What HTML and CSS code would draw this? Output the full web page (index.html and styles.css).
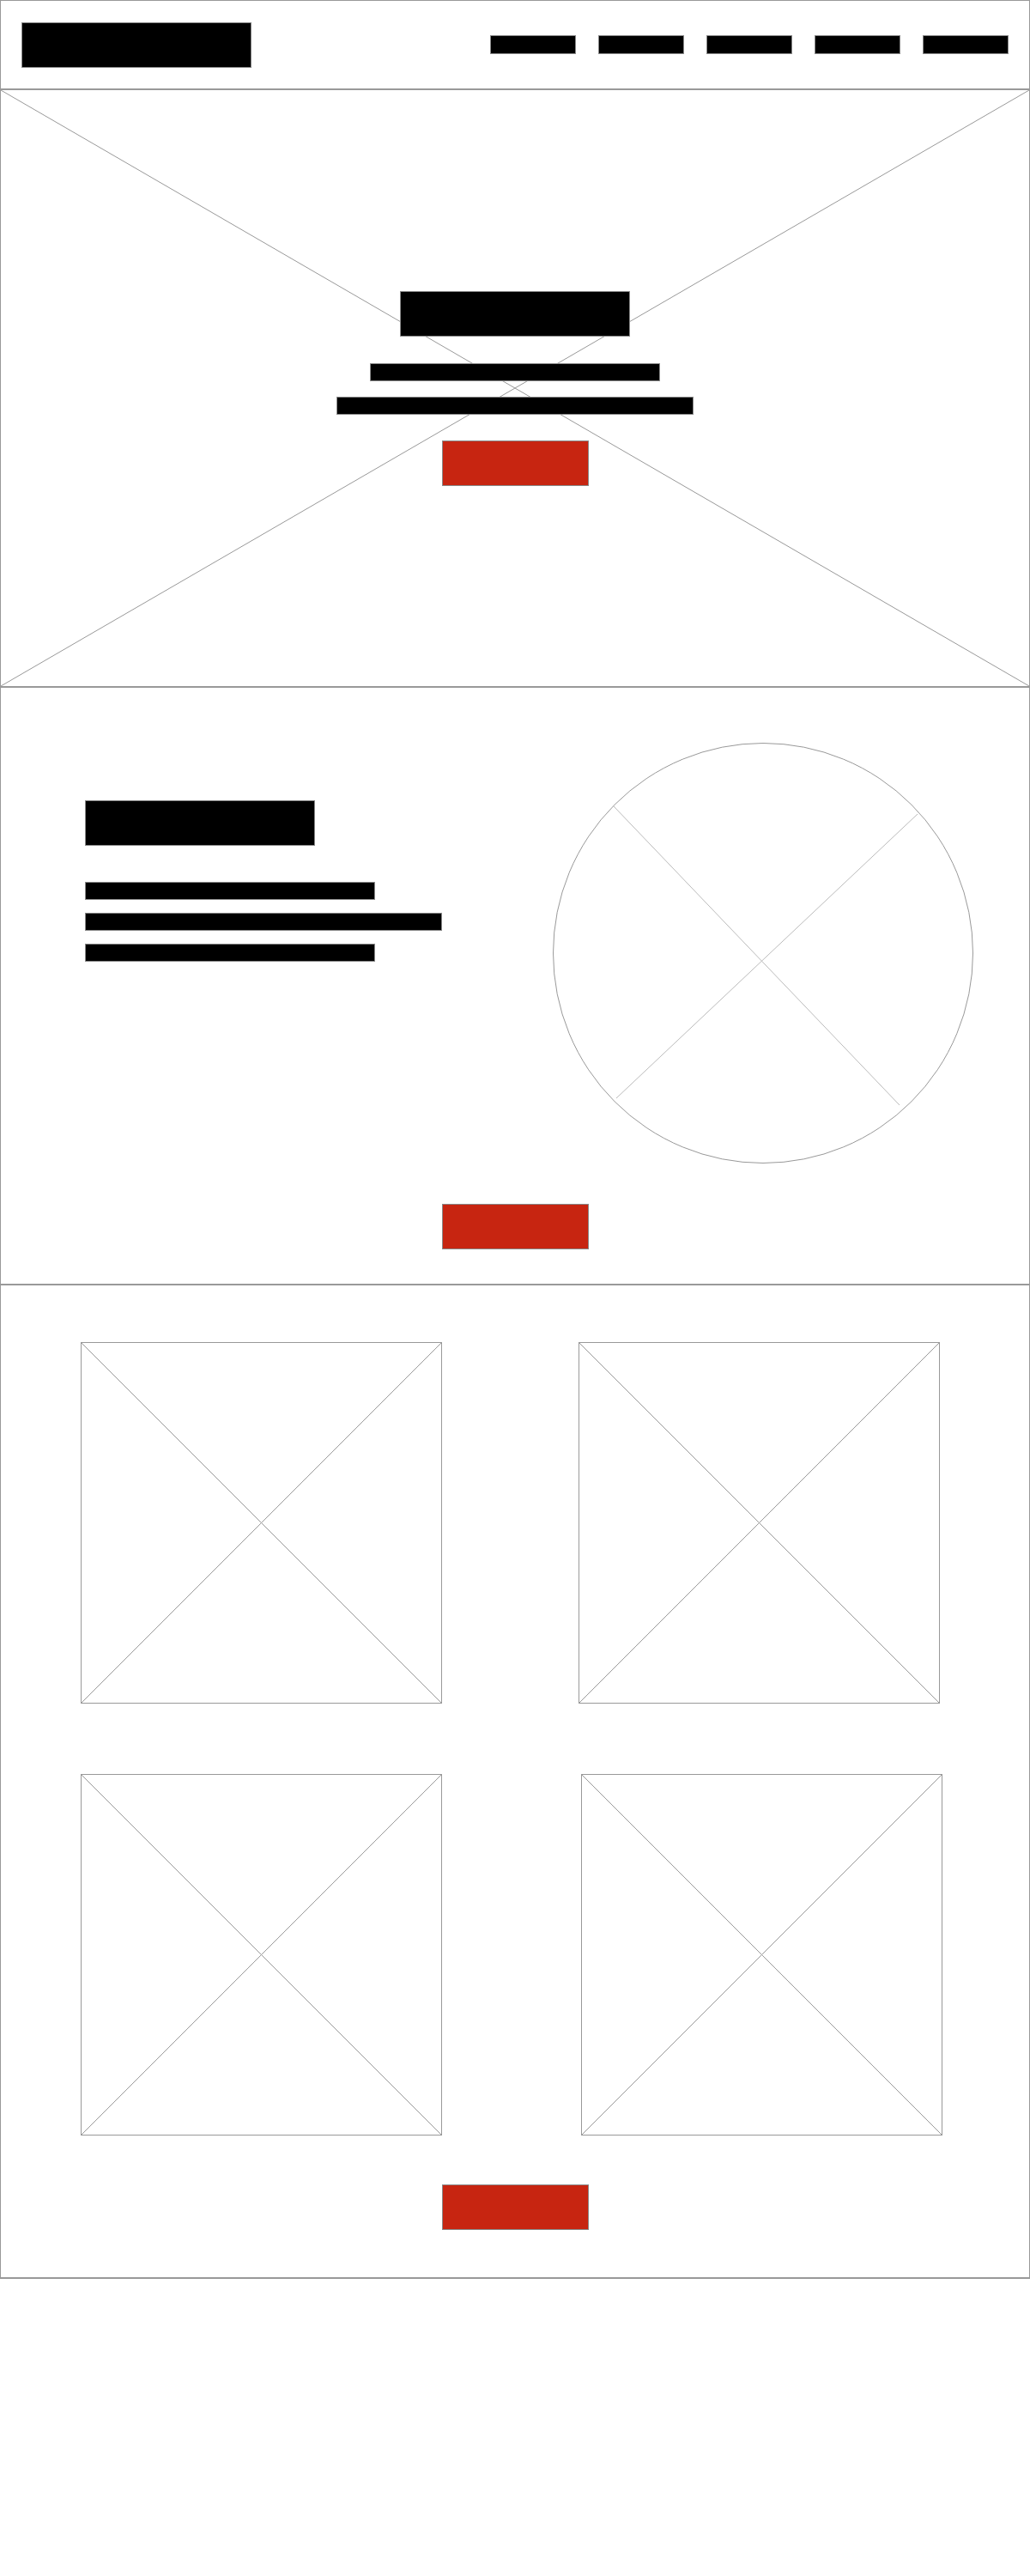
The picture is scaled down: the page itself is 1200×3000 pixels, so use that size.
FILE: index.html
```html
<!DOCTYPE html>
<html lang="en">
<head>
    <meta charset="UTF-8">
    <meta name="viewport" content="width=device-width, initial-scale=1.0">
    <title>Wireframe</title>
    <link rel="stylesheet" href="styles.css">
</head>
<body>
    <div class="page">
        <header class="header">
            <div class="logo"></div>
            <nav class="nav">
                <a class="nav_item" href="#"></a>
                <a class="nav_item" href="#"></a>
                <a class="nav_item" href="#"></a>
                <a class="nav_item" href="#"></a>
                <a class="nav_item" href="#"></a>
            </nav>
        </header>

        <section class="hero">
            <svg class="cross" viewBox="0 0 100 100" preserveAspectRatio="none">
                <line x1="0" y1="0" x2="100" y2="100" />
                <line x1="100" y1="0" x2="0" y2="100" />
            </svg>
            <div class="hero_content">
                <div class="bar bar_title"></div>
                <div class="bar bar_line hero_line_short"></div>
                <div class="bar bar_line hero_line_long"></div>
                <a class="btn btn_hero" href="#"></a>
            </div>
        </section>

        <section class="about">
            <div class="about_row">
                <div class="about_text">
                    <div class="bar bar_title about_title"></div>
                    <div class="bar bar_line line_short"></div>
                    <div class="bar bar_line line_long"></div>
                    <div class="bar bar_line line_short"></div>
                </div>
                <svg class="circle_img" width="490" height="490" viewBox="0 0 490 490">
                    <line x1="71" y1="74" x2="404" y2="422" />
                    <line x1="425" y1="83" x2="74" y2="414" />
                    <circle cx="245" cy="245" r="244.5" />
                </svg>
            </div>
            <a class="btn" href="#"></a>
        </section>

        <section class="gallery">
            <div class="gallery_grid">
                <div class="shot">
                    <svg class="cross" viewBox="0 0 100 100" preserveAspectRatio="none">
                        <line x1="0" y1="0" x2="100" y2="100" />
                        <line x1="100" y1="0" x2="0" y2="100" />
                    </svg>
                </div>
                <div class="shot">
                    <svg class="cross" viewBox="0 0 100 100" preserveAspectRatio="none">
                        <line x1="0" y1="0" x2="100" y2="100" />
                        <line x1="100" y1="0" x2="0" y2="100" />
                    </svg>
                </div>
                <div class="shot">
                    <svg class="cross" viewBox="0 0 100 100" preserveAspectRatio="none">
                        <line x1="0" y1="0" x2="100" y2="100" />
                        <line x1="100" y1="0" x2="0" y2="100" />
                    </svg>
                </div>
                <div class="shot shot_shift">
                    <svg class="cross" viewBox="0 0 100 100" preserveAspectRatio="none">
                        <line x1="0" y1="0" x2="100" y2="100" />
                        <line x1="100" y1="0" x2="0" y2="100" />
                    </svg>
                </div>
            </div>
            <a class="btn" href="#"></a>
        </section>
    </div>
</body>
</html>
```

FILE: styles.css
```css
*{
    margin:0;
    padding:0;
    box-sizing: border-box;
}
body {
    background-color: #fff;
    font-family: "Liberation Sans", Arial, sans-serif;
}
.page {
    width: 1200px;
    border: 1px solid #999;
    border-bottom: none;
}

/* header */
.header {
    height: 104px;
    display: flex;
    justify-content: space-between;
    align-items: center;
    padding: 0 24px;
    border-bottom: 2px solid #999;
}
.logo {
    width: 268px;
    height: 53px;
    background-color: #000;
    border: 1px solid #888;
}
.nav {
    display: flex;
    gap: 26px;
}
.nav_item {
    display: block;
    width: 100px;
    height: 22px;
    background-color: #000;
    border: 1px solid #888;
}

/* shared pieces */
.bar {
    background-color: #000;
    border: 1px solid #888;
}
.bar_title {
    width: 268px;
    height: 53px;
}
.bar_line {
    height: 21px;
}
.btn {
    display: block;
    width: 171px;
    height: 53px;
    margin: 0 auto;
    background-color: #c72511;
    border: 1px solid #888;
}
.cross {
    position: absolute;
    top: 0;
    left: 0;
    width: 100%;
    height: 100%;
}
.cross line {
    stroke: #999;
    stroke-width: 1;
    vector-effect: non-scaling-stroke;
}

/* hero */
.hero {
    position: relative;
    height: 696px;
    border-bottom: 2px solid #999;
    display: flex;
    justify-content: center;
    align-items: center;
}
.hero_content {
    position: relative;
    display: flex;
    flex-direction: column;
    align-items: center;
}
.hero_line_short {
    width: 338px;
    margin-top: 31px;
}
.hero_line_long {
    width: 416px;
    margin-top: 18px;
}
.btn_hero {
    margin-top: 30px;
}

/* about */
.about {
    height: 696px;
    padding-top: 64px;
    border-bottom: 2px solid #999;
}
.about_row {
    display: flex;
    justify-content: space-between;
    align-items: flex-start;
    padding: 0 65px 0 98px;
    margin-bottom: 47px;
}
.about_text {
    margin-top: 67px;
}
.about_title {
    margin-bottom: 42px;
}
.line_short {
    width: 338px;
}
.line_long {
    width: 416px;
}
.about_text .bar_line + .bar_line {
    margin-top: 15px;
}
.circle_img {
    display: block;
}
.circle_img circle {
    fill: none;
    stroke: #999;
    stroke-width: 1;
}
.circle_img line {
    stroke: #bbb;
    stroke-width: 1;
}

/* gallery */
.gallery {
    padding: 66px 0 55px;
    border-bottom: 2px solid #999;
}
.gallery_grid {
    display: grid;
    grid-template-columns: 421px 421px;
    column-gap: 159px;
    row-gap: 82px;
    padding-left: 93px;
    margin-bottom: 57px;
}
.shot {
    position: relative;
    width: 421px;
    height: 421px;
    border: 1px solid #999;
}
.shot_shift {
    margin-left: 3px;
}
```
